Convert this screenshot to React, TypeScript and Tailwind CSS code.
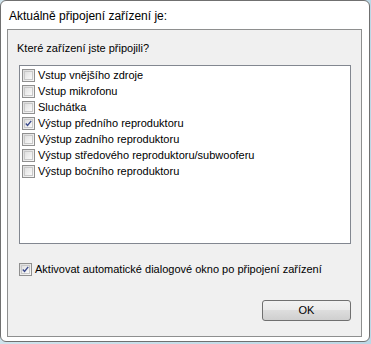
import React from "react";

const items: { label: string; checked: boolean }[] = [
  { label: "Vstup vnějšího zdroje", checked: false },
  { label: "Vstup mikrofonu", checked: false },
  { label: "Sluchátka", checked: false },
  { label: "Výstup předního reproduktoru", checked: true },
  { label: "Výstup zadního reproduktoru", checked: false },
  { label: "Výstup středového reproduktoru/subwooferu", checked: false },
  { label: "Výstup bočního reproduktoru", checked: false },
];

function Box({ checked }: { checked: boolean }) {
  return (
    <div className="w-[13px] h-[13px] border border-[#8f8f8f] bg-[linear-gradient(135deg,#dcdcdc,#f8f8f8)] p-[1px] shrink-0">
      <div className="w-full h-full border border-[#c8c8c8] bg-[linear-gradient(135deg,#e0e0e0,#fafafa)] flex items-center justify-center">
        {checked && (
          <svg width="9" height="9" viewBox="0 0 9 9">
            <path d="M1 4.5 L3.3 7 L8 1.2" fill="none" stroke="#3b4a8c" strokeWidth="1.8" />
          </svg>
        )}
      </div>
    </div>
  );
}

export default function App() {
  return (
    <div className="w-[371px] h-[344px] bg-[linear-gradient(90deg,#cfe3ec,#bcd8e6)] font-['Liberation_Sans',Arial,sans-serif] text-[11px] text-black">
      <div className="w-[370px] h-[342px] bg-white border border-[#707070] rounded-[6px] flex flex-col pl-[6px] pr-[7px] pb-[4px]">
        <div className="h-[28px] flex items-center pl-[2px] pt-[1px] text-[12px]">
          Aktuálně připojení zařízení je:
        </div>
        <div className="flex-1 bg-[#f0f0f0] border border-[#8e8f8f] flex flex-col pl-[11px] pr-[10px]">
          <div className="h-[35px] flex items-center ml-[-2px] pt-[1px]">Které zařízení jste připojili?</div>
          <div className="h-[179px] bg-white border border-[#828790] pt-[1px] pl-[2px] flex flex-col">
            {items.map((it) => (
              <div key={it.label} className="h-[16px] flex items-center gap-[3px] whitespace-nowrap">
                <Box checked={it.checked} />
                <span className="leading-none">{it.label}</span>
              </div>
            ))}
          </div>
          <div className="mt-[18px] h-[14px] flex items-center gap-[3px] whitespace-nowrap">
            <Box checked={true} />
            <span className="leading-none">Aktivovat automatické dialogové okno po připojení zařízení</span>
          </div>
          <div className="mt-[24px] flex justify-end">
            <button className="w-[89px] h-[21px] border border-[#707070] rounded-[3px] bg-[linear-gradient(180deg,#f2f2f2_0%,#ebebeb_45%,#dddddd_50%,#cfcfcf_100%)] text-[11px] leading-none">
              OK
            </button>
          </div>
        </div>
      </div>
    </div>
  );
}
